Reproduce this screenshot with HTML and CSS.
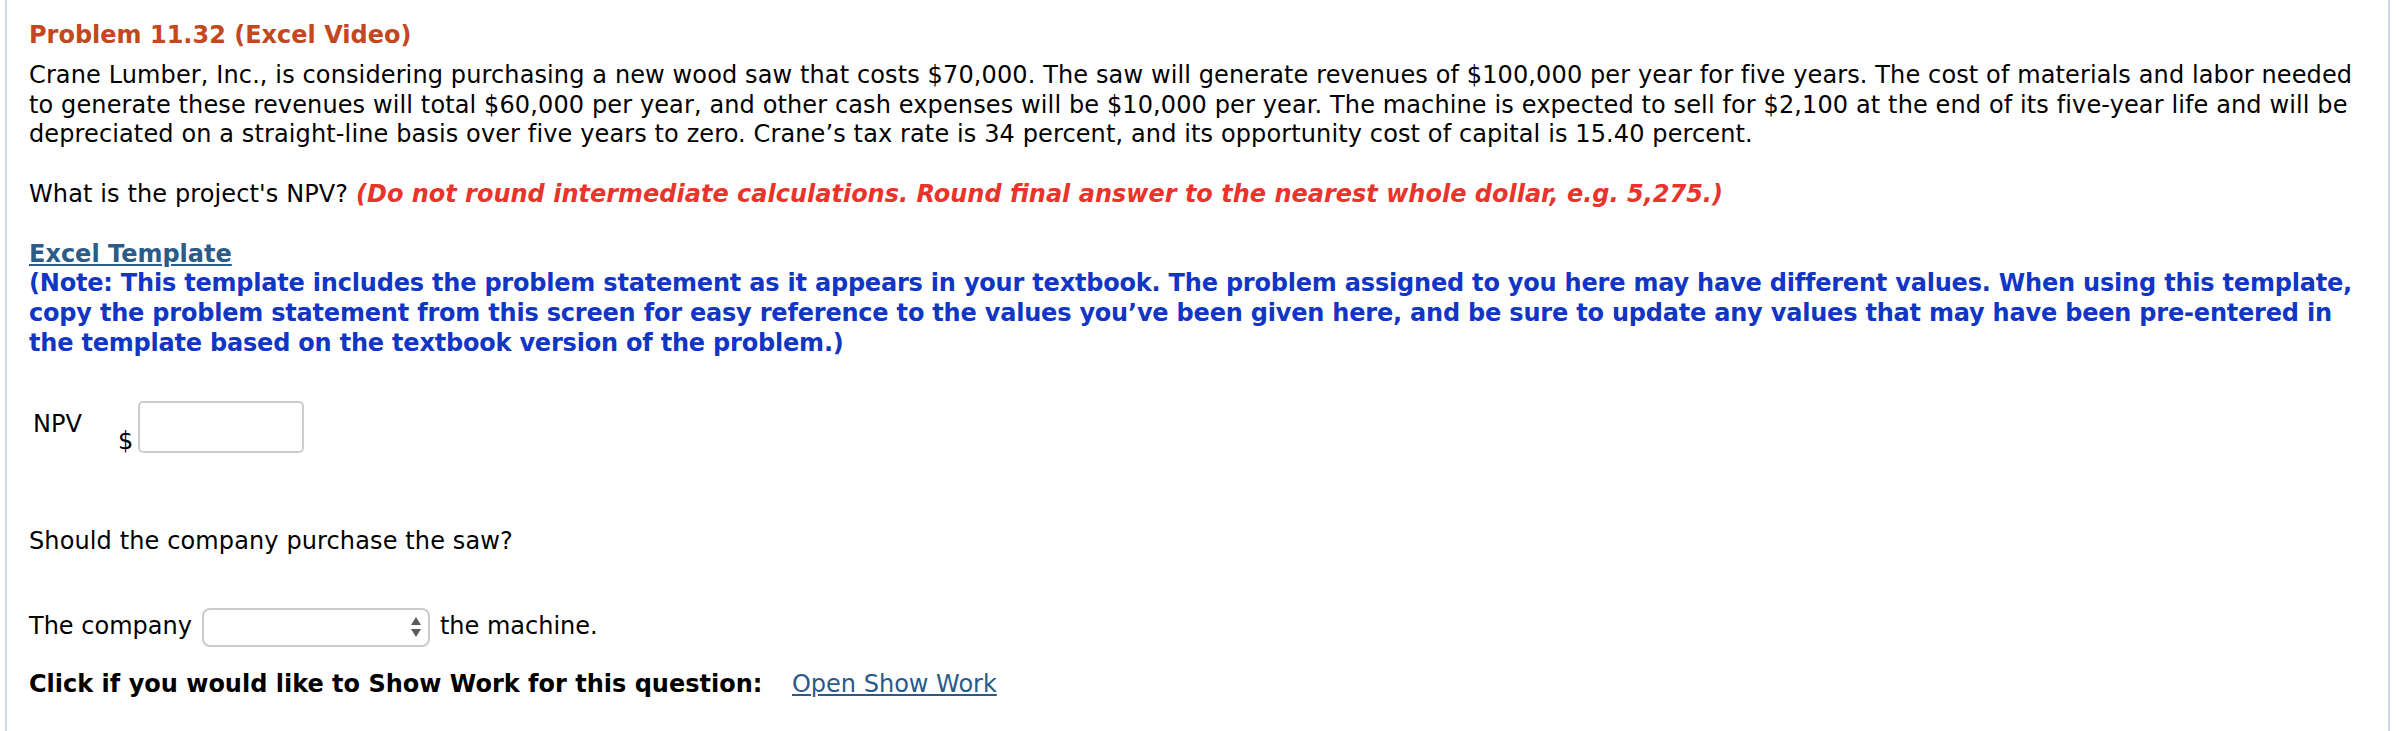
FILE: index.html
```html
<!DOCTYPE html>
<html lang="en">

<head>
    <meta charset="UTF-8">
    <title>Problem 11.32 (Excel Video)</title>
    <link rel="stylesheet" href="styles.css">
</head>

<body>
    <div class="question-frame">
        <h1 class="problem-title">Problem 11.32 (Excel Video)</h1>

        <!-- 题目正文 -->
        <p>Crane Lumber, Inc., is considering purchasing a new wood saw that costs $70,000. The saw will generate revenues of $100,000 per year for five years. The cost of materials and labor needed to generate these revenues will total $60,000 per year, and other cash expenses will be $10,000 per year. The machine is expected to sell for $2,100 at the end of its five-year life and will be depreciated on a straight-line basis over five years to zero. Crane’s tax rate is 34 percent, and its opportunity cost of capital is 15.40 percent.</p>

        <p>What is the project's NPV? <span class="hint">(Do not round intermediate calculations. Round final answer to the nearest whole dollar, e.g. 5,275.)</span></p>

        <p>
            <a href="#" class="template-link">Excel Template</a><br>
            <span class="note">(Note: This template includes the problem statement as it appears in your textbook. The problem assigned to you here may have different values. When using this template, copy the problem statement from this screen for easy reference to the values you’ve been given here, and be sure to update any values that may have been pre&#8209;entered in the template based on the textbook version of the problem.)</span>
        </p>

        <!-- 答案输入 -->
        <div class="npv-row">
            <div class="npv-label">NPV</div>
            <div class="npv-field">
                <span class="currency">$</span>
                <input type="text" class="answer-input">
            </div>
        </div>

        <p class="purchase-question">Should the company purchase the saw?</p>

        <div class="choice-row">
            <span>The company</span>
            <span class="fake-select">
                <svg class="select-arrows" width="12" height="24" viewBox="0 0 12 24">
                    <path d="M6 2 L11 10 L1 10 Z" fill="#5c5c5c"/>
                    <path d="M1 14 L11 14 L6 22 Z" fill="#5c5c5c"/>
                </svg>
            </span>
            <span>the machine.</span>
        </div>

        <div class="show-work">
            <b>Click if you would like to Show Work for this question:</b>
            <a href="#" class="show-work-link">Open Show Work</a>
        </div>
    </div>
</body>

</html>
```

FILE: styles.css
```css
/* 全局样式 */
body {
    margin: 0;
    padding: 0;
    background: #fff;
    color: #000;
    font-family: Verdana, "DejaVu Sans", sans-serif;
    font-size: 24px;
    line-height: 29.8px;
    overflow: hidden;
}

/* 外框 */
.question-frame {
    box-sizing: border-box;
    margin-left: 5px;
    width: 2385px;
    height: 731px;
    padding: 21px 16px 0 22px;
    border-left: 2px solid #d3d8e6;
    border-right: 2px solid #d3d8e6;
}

.problem-title {
    margin: 0 0 10px;
    font-size: 24px;
    line-height: 29.8px;
    font-weight: bold;
    color: #c4481e;
}

p {
    margin: 0 0 29.8px;
    letter-spacing: 0.12px;
}

.hint {
    color: #e8342a;
    font-weight: bold;
    font-style: italic;
    letter-spacing: 0;
}

.template-link {
    color: #2b5b86;
    font-weight: bold;
    text-decoration: underline;
    letter-spacing: 0;
}

.note {
    color: #1136c4;
    font-weight: bold;
    letter-spacing: -0.2px;
}

/* NPV 输入行 */
.npv-row {
    display: flex;
    align-items: center;
    margin-top: 42px;
}

.npv-label {
    width: 85px;
    padding-left: 4px;
    padding-bottom: 4px;
}

.npv-field {
    display: flex;
    align-items: flex-end;
}

.currency {
    line-height: 24px;
    margin-right: 5px;
}

.answer-input {
    box-sizing: border-box;
    width: 166px;
    height: 52px;
    margin: 0;
    border: 2px solid #cdcdcd;
    border-radius: 5px;
    font: inherit;
    outline: none;
}

.purchase-question {
    margin: 74px 0 0;
}

/* 下拉选择 */
.choice-row {
    display: flex;
    align-items: center;
    gap: 10px;
    margin-top: 51px;
}

.fake-select {
    box-sizing: border-box;
    display: flex;
    align-items: center;
    justify-content: flex-end;
    width: 228px;
    height: 39px;
    padding-right: 6px;
    border: 2px solid #cbcbcb;
    border-radius: 8px;
    background: #fff;
}

.show-work {
    margin-top: 23px;
}

.show-work-link {
    margin-left: 22px;
    color: #2a5a8a;
    text-decoration: underline;
}
```
